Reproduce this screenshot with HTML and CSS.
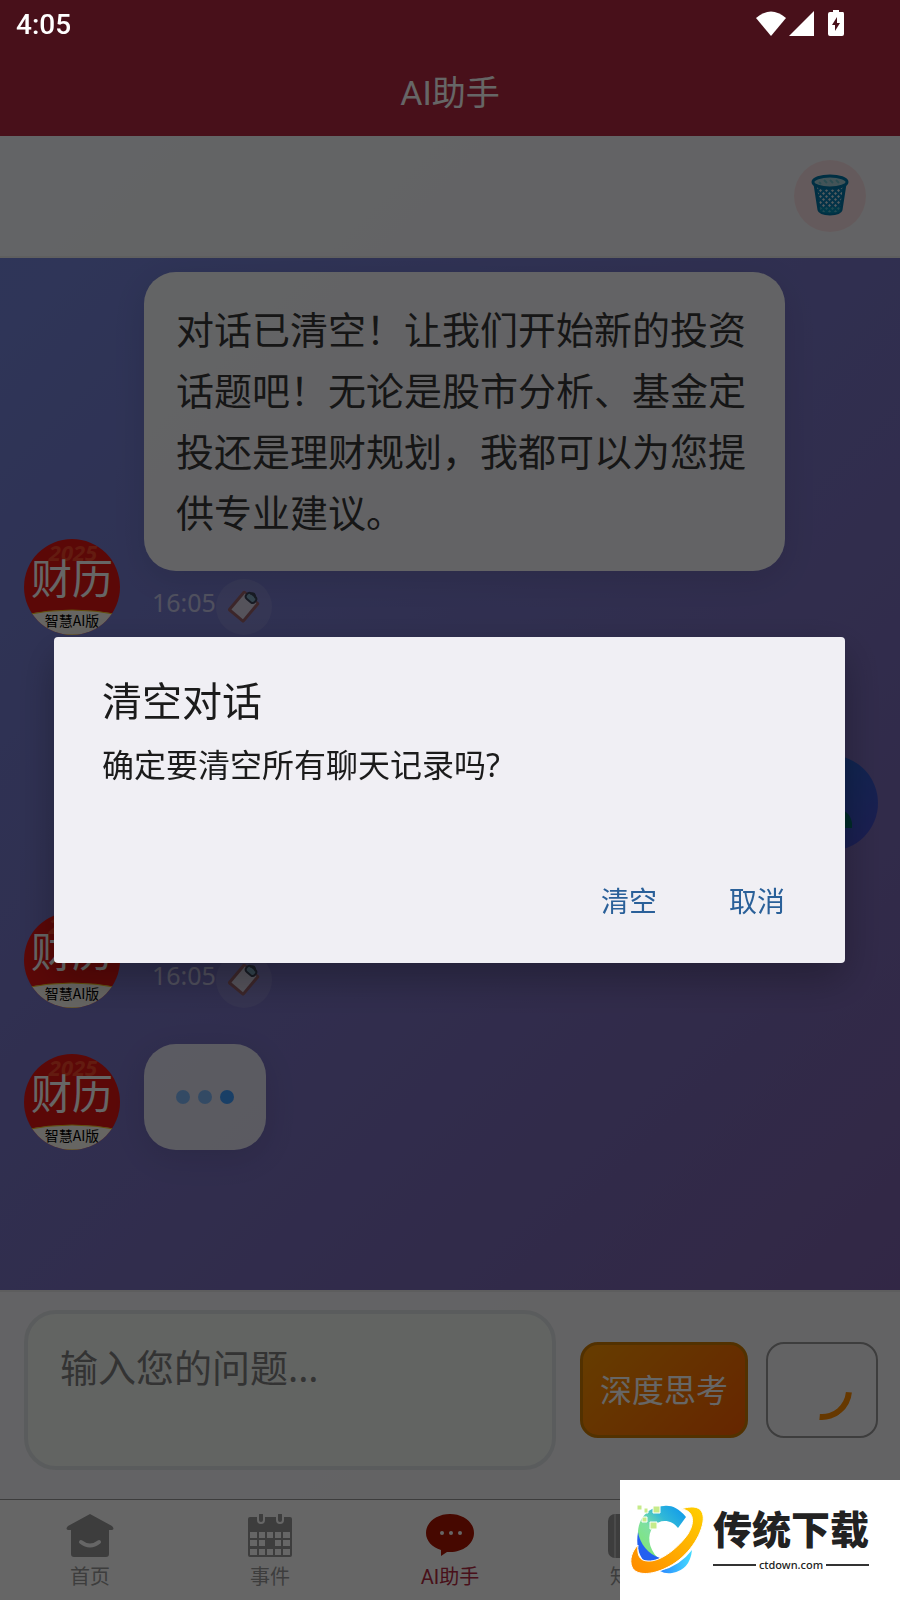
FILE: index.html
```html
<!doctype html>
<html lang="zh-CN">
	<head>
		<title>AI助手</title>
		<meta charset="utf-8" />
		<meta name="viewport" content="width=device-width, initial-scale=1.0" />
		<link rel="stylesheet" href="styles.css">
	</head>

	<body>

		<!-- shared drawings -->
		<svg class="defs" aria-hidden="true">
			<defs>
				<clipPath id="round"><circle cx="48" cy="48" r="48"/></clipPath>
				<symbol id="logo" viewBox="0 0 96 96">
					<g clip-path="url(#round)">
						<rect width="96" height="96" fill="#e31513"/>
						<text class="logo-year" x="49" y="22" text-anchor="middle">2025</text>
						<path d="M0 76 Q48 66 96 76 V96 H0Z" fill="#fffdf5" stroke="#f5c518" stroke-width="1"/>
						<text class="logo-name" x="48" y="55" text-anchor="middle">财历</text>
						<text class="logo-sub" x="48" y="87" text-anchor="middle">智慧AI版</text>
					</g>
				</symbol>
				<symbol id="clip" viewBox="0 0 36 36">
					<g transform="rotate(40 18 18)">
						<rect x="7" y="5" width="21" height="26" rx="2" fill="#96606a"/>
						<rect x="10" y="7" width="15" height="21" fill="#d4d0e4"/>
						<rect x="12" y="3" width="11" height="7" rx="3" fill="#7fa8c0" stroke="#3a4358" stroke-width="2"/>
						<path d="M14 4 Q17 -1 21 4" fill="none" stroke="#3a4358" stroke-width="2"/>
					</g>
				</symbol>
			</defs>
		</svg>

		<header class="header">
			<div class="status">
				<span class="clock">4:05</span>
				<svg class="status-icons" viewBox="0 0 90 28" width="90" height="28" aria-hidden="true">
					<path d="M0 7 Q15 -6 30 7 L15 25Z" fill="#fff"/>
					<path d="M33 25 L58 0 V25Z" fill="#fff"/>
					<path d="M77 -1 H83 V1 H87 Q88 1 88 3 V23 Q88 25 86 25 H74 Q72 25 72 23 V3 Q72 1 74 1 H77Z" fill="#fff"/>
					<path d="M81 6 L76 14 H79 V20 L84 12 H81Z" fill="#48101a"/>
				</svg>
			</div>
			<h1 class="title">AI助手</h1>
		</header>

		<main class="assistant">
			<div class="toolbar">
				<button class="trash" type="button" aria-label="清空对话">
					<svg viewBox="0 0 40 44" width="40" height="44" aria-hidden="true">
						<defs>
							<pattern id="mesh" width="6" height="6" patternUnits="userSpaceOnUse">
								<rect width="6" height="6" fill="#0a7fb5"/>
								<path d="M1.500 0 L3 1.500 L1.500 3 L0 1.500Z M4.500 3 L6 4.500 L4.500 6 L3 4.500Z" fill="#d5e6ec"/>
							</pattern>
						</defs>
						<path d="M5 10 L9 36 Q10 40 20 40 Q30 40 31 36 L35 10Z" fill="url(#mesh)" stroke="#0277a8" stroke-width="3"/>
						<path d="M9 33 H31 L30 38 Q20 41 10 38Z" fill="#0097b8" opacity=".6"/>
						<ellipse cx="20" cy="8" rx="17" ry="6" fill="#a8d2dc" stroke="#0277a8" stroke-width="3"/>
						<path d="M9 8 l2 2 m3 -4 l3 3 m3 -3 l3 3 m3 -3 l3 3" stroke="#6fc0ce" stroke-width="2"/>
					</svg>
				</button>
			</div>

			<section class="chat">
				<div class="row">
					<svg class="avatar" role="img" aria-label="财历"><use href="#logo"/></svg>
					<div class="content">
						<p class="bubble">对话已清空！让我们开始新的投资话题吧！无论是股市分析、基金定投还是理财规划，我都可以为您提供专业建议。</p>
						<div class="meta">
							<time>16:05</time>
							<button class="copy" type="button" aria-label="复制"><svg width="36" height="36"><use href="#clip"/></svg></button>
						</div>
					</div>
				</div>

				<div class="row mine">
					<svg class="avatar" viewBox="0 0 96 96" aria-hidden="true">
						<defs>
							<linearGradient id="blue" x1="0" y1="0" x2="1" y2="1">
								<stop offset="0" stop-color="#1668c8"/>
								<stop offset="1" stop-color="#4a48c8"/>
							</linearGradient>
						</defs>
						<circle cx="48" cy="48" r="48" fill="url(#blue)"/>
						<circle cx="48" cy="36" r="14" fill="#e8b48c"/>
						<path d="M26 73 V68 Q28 53 48 53 Q68 53 70 68 V73Z" fill="#006a68"/>
					</svg>
				</div>

				<div class="row">
					<svg class="avatar" role="img" aria-label="财历"><use href="#logo"/></svg>
					<div class="content">
						<p class="bubble short"></p>
						<div class="meta">
							<time>16:05</time>
							<button class="copy" type="button" aria-label="复制"><svg width="36" height="36"><use href="#clip"/></svg></button>
						</div>
					</div>
				</div>

				<div class="row">
					<svg class="avatar" role="img" aria-label="财历"><use href="#logo"/></svg>
					<div class="content">
						<div class="bubble typing"><i></i><i></i><i class="on"></i></div>
					</div>
				</div>
			</section>

			<form class="composer">
				<textarea class="question" aria-label="输入您的问题" placeholder="输入您的问题..."></textarea>
				<button class="think" type="button">深度思考</button>
				<button class="send" type="button" aria-label="发送"><span class="spinner"></span></button>
			</form>
		</main>

		<nav class="tabs">
			<a class="tab" href="#home">
				<svg viewBox="0 0 48 44" width="48" height="44" aria-hidden="true">
					<path d="M24 0 L46 12 Q49 15 46 16 H43 V40 Q43 43 40 43 H8 Q5 43 5 40 V16 H2 Q-1 15 2 12Z" fill="#999"/>
					<path d="M15 28 Q24 35 33 28" fill="none" stroke="#fff" stroke-width="4" stroke-linecap="round"/>
				</svg>
				首页
			</a>
			<a class="tab" href="#events">
				<svg viewBox="0 0 48 44" width="48" height="44" aria-hidden="true">
					<path d="M4 3 H44 Q46 3 46 5 V41 Q46 43 44 43 H4 Q2 43 2 41 V5 Q2 3 4 3Z" fill="#999"/>
					<path d="M11 0 h8 v6 q0 4 -4 4 t-4 -4z M30 0 h8 v6 q0 4 -4 4 t-4 -4z" fill="#fff"/>
					<path d="M15 1 V6 M34 1 V6" stroke="#999" stroke-width="4" stroke-linecap="round"/>
					<path d="M4 18h7v6h-7z M13 18h6v6h-6z M21 18h6v6h-6z M29 18h6v6h-6z M37 18h7v6h-7z M4 26h7v6h-7z M13 26h6v6h-6z M29 26h6v6h-6z M37 26h7v6h-7z M4 35h7v6h-7z M13 35h6v6h-6z M21 35h6v6h-6z M29 35h6v6h-6z M37 35h7v6h-7z" fill="#fff"/>
				</svg>
				事件
			</a>
			<a class="tab active" href="#assistant">
				<svg viewBox="0 0 48 44" width="48" height="44" aria-hidden="true">
					<path d="M24 0 C37 0 48 8 48 19 C48 30 37 38 24 38 L21 38 L15 42 V36 C6 33 0 27 0 19 C0 8 11 0 24 0Z" fill="#b01400"/>
					<circle cx="16" cy="19" r="2" fill="#fff"/>
					<circle cx="25" cy="19" r="2" fill="#fff"/>
					<circle cx="34" cy="19" r="2" fill="#fff"/>
				</svg>
				AI助手
			</a>
			<a class="tab" href="#learn">
				<svg viewBox="0 0 48 44" width="48" height="44" aria-hidden="true">
					<rect x="2" y="0" width="44" height="44" rx="7" fill="#999"/>
					<path d="M9 0 V44" stroke="#bbb" stroke-width="2"/>
				</svg>
				知识
			</a>
			<span class="tab"></span>
		</nav>

		<div class="mask">
			<div class="dialog" role="dialog" aria-labelledby="dialog-title">
				<h2 id="dialog-title">清空对话</h2>
				<p>确定要清空所有聊天记录吗?</p>
				<div class="actions">
					<button type="button">清空</button>
					<button type="button">取消</button>
				</div>
			</div>
		</div>

		<aside class="brand">
			<svg viewBox="0 0 76 72" width="76" height="72" aria-hidden="true">
				<defs>
					<linearGradient id="c1" x1="0" y1="1" x2="1" y2="0">
						<stop offset="0" stop-color="#7fe86a"/>
						<stop offset=".4" stop-color="#7fe0a0"/>
						<stop offset=".65" stop-color="#30b8d8"/>
						<stop offset="1" stop-color="#0a94f0"/>
					</linearGradient>
					<linearGradient id="c2" x1="0" y1="1" x2="1" y2="0">
						<stop offset="0" stop-color="#ff8a00"/>
						<stop offset="1" stop-color="#ffcf00"/>
					</linearGradient>
					<linearGradient id="c3" x1="0" y1="0" x2="1" y2="0">
						<stop offset="0" stop-color="#2a88ff"/>
						<stop offset="1" stop-color="#45dcff"/>
					</linearGradient>
				</defs>
				<!-- letter C -->
				<path d="M56 13 C48 3 40 1 34 2 C18 3 8 14 8 30 C11 42 16 50 28 54 C18 44 17 31 23 23 C30 14 42 16 48 24Z" fill="url(#c1)"/>
				<path d="M8 28 C10 40 18 50 30 54 Q22 60 14 57 C8 50 6 40 8 28Z" fill="#2360f0"/>
				<path d="M30 67 Q50 62 62 46 Q60 66 42 69 Q35 70 30 67Z" fill="url(#c3)"/>
				<!-- orbit -->
				<path d="M51 5 C66 0 75 4 73 18 C70 36 54 56 36 64 C22 71 6 72 2 63 C-1 56 2 47 8 41 C7 50 9 57 18 57 C31 58 49 43 58 30 C66 17 63 6 51 5Z" fill="url(#c2)" stroke="#fff" stroke-width="1"/>
				<path d="M23 2h7v7h-7z M12 13h5v5h-5z M20 18h7v7h-7z M14 4h4v5h-4z M7 1h5v5h-5z" fill="#c6eb8a" stroke="#fff" stroke-width="1"/>
			</svg>
			<div class="brand-text">
				<strong>传统下载</strong>
				<span class="site">ctdown.com</span>
			</div>
		</aside>

	</body>
</html>
```

FILE: styles.css
```css
* {
	box-sizing: border-box;
}

body {
	margin: 0;
	min-height: 100vh;
	display: flex;
	flex-direction: column;
	font-family: "Noto Sans", "Noto Sans CJK SC", sans-serif;
	background: #fff;
}

h1, h2, p {
	margin: 0;
	font-weight: normal;
}

button {
	font: inherit;
	padding: 0;
	border: 0;
	background: none;
}

.defs {
	position: absolute;
	width: 0;
	height: 0;
}

/* header */
.header {
	background: #b42841;
}

/* stays bright above the mask */
.status {
	position: relative;
	z-index: 3;
	height: 50px;
	display: flex;
	justify-content: space-between;
	align-items: center;
	padding: 0 54px 0 16px;
	color: #fff;
}

.status-icons {
	overflow: visible;
}

.clock {
	font: 500 28px/50px Roboto, sans-serif;
}

.title {
	text-align: center;
	color: #fff;
	font-family: Roboto, "Noto Sans CJK SC", sans-serif;
	font-size: 34px;
	line-height: 86px;
}

/* assistant page */
.assistant {
	flex: 1;
	display: flex;
	flex-direction: column;
	background: linear-gradient(135deg, #7488e0, #7f5fa8);
}

.toolbar {
	display: flex;
	justify-content: flex-end;
	padding: 24px 34px;
	background: rgba(255, 255, 255, 0.95);
	border-bottom: 2px solid #eee;
}

.trash {
	width: 72px;
	height: 72px;
	border-radius: 50%;
	background: #fbe2e6;
	display: flex;
	justify-content: center;
	align-items: center;
}

.chat {
	flex: 1;
	display: flex;
	flex-direction: column;
	gap: 36px;
	padding: 14px 22px 36px 24px;
}

.row {
	display: flex;
	align-items: flex-end;
	gap: 24px;
}

.mine {
	flex-direction: row-reverse;
	min-height: 180px;
}

.avatar {
	flex: none;
	width: 96px;
	height: 96px;
}

.logo-year {
	font: italic bold 22px "Open Sans", sans-serif;
	fill: #f8452a;
}

.logo-name {
	font: 41px "Noto Sans CJK SC", sans-serif;
	fill: #fff;
}

.logo-sub {
	font: 14px "Noto Sans CJK SC", sans-serif;
	fill: #000;
}

.content {
	max-width: 75%;
	display: flex;
	flex-direction: column;
	gap: 8px;
}

.bubble {
	padding: 27px 32px 28px;
	border-radius: 32px;
	background: rgba(255, 255, 255, 0.95);
	box-shadow: 0 8px 32px rgba(0, 0, 0, 0.1);
	color: #383838;
	font-size: 38px;
	line-height: 61px;
}

.short {
	min-height: 57px;
}

.typing {
	display: flex;
	gap: 8px;
	padding: 46px 32px;
	background: rgba(255, 255, 255, 0.8);
}

.typing i {
	width: 14px;
	height: 14px;
	border-radius: 50%;
	background: #409eff;
	opacity: 0.6;
}

.typing .on {
	opacity: 1;
}

.meta {
	display: flex;
	align-items: flex-start;
	padding-left: 8px;
	color: rgba(255, 255, 255, 0.6);
	font-size: 25px;
	line-height: 46px;
}

.copy {
	width: 56px;
	height: 56px;
	border-radius: 50%;
	background: rgba(255, 255, 255, 0.1);
	display: flex;
	justify-content: center;
	align-items: center;
}

/* question form */
.composer {
	display: flex;
	align-items: center;
	padding: 18px 22px 29px 24px;
	background: rgba(255, 255, 255, 0.95);
	border-top: 2px solid #e8e8ea;
}

.question {
	flex: 1;
	min-width: 0;
	height: 160px;
	margin-right: 24px;
	padding: 23px 32px;
	border: 4px solid #e2e6e8;
	border-radius: 32px;
	background: #f5faf6;
	font: inherit;
	font-size: 38px;
	line-height: 60px;
	resize: none;
}

.question::placeholder {
	color: #808080;
}

.think,
.send {
	height: 96px;
	border-radius: 18px;
}

.think {
	width: 168px;
	margin-right: 18px;
	border: 3px solid #cc7a00;
	background: linear-gradient(135deg, #ff9800, #ff5f00);
	color: #fff;
	font-size: 32px;
	line-height: 40px;
}

.send {
	width: 112px;
	border: 2px solid #999;
	display: flex;
	justify-content: center;
	align-items: center;
}

.spinner {
	width: 60px;
	height: 60px;
	border: 6px solid transparent;
	border-bottom-color: #ff8c00;
	border-radius: 50%;
	transform: rotate(-40deg);
}

/* bottom tabs */
.tabs {
	display: flex;
	border-top: 1px solid #999;
	background: #fff;
}

.tab {
	flex: 1;
	display: flex;
	flex-direction: column;
	align-items: center;
	gap: 4px;
	padding: 14px 0 8px;
	color: #999;
	font-family: Roboto, "Noto Sans CJK SC", sans-serif;
	font-size: 20px;
	line-height: 30px;
	text-decoration: none;
}

.active {
	color: #b42841;
}

/* confirm dialog */
.mask {
	position: fixed;
	inset: 0;
	z-index: 2;
	display: flex;
	align-items: center;
	padding: 0 55px 0 54px;
	background: rgba(0, 0, 0, 0.6);
}

.dialog {
	flex: 1;
	padding: 39px 48px 42px;
	border-radius: 4px;
	background: #f0eff4;
	box-shadow: 0 16px 40px rgba(0, 0, 0, 0.28);
	color: #1b1b1b;
}

.dialog h2 {
	font-size: 40px;
	line-height: 50px;
	margin-bottom: 17px;
}

.dialog p {
	font-size: 32px;
	line-height: 44px;
}

.actions {
	display: flex;
	justify-content: flex-end;
	gap: 72px;
	margin-top: 94px;
	padding-right: 12px;
}

.actions button {
	color: #2a6099;
	font-size: 28px;
	line-height: 40px;
}

/* site badge */
.brand {
	position: fixed;
	right: 0;
	bottom: 0;
	z-index: 4;
	width: 280px;
	height: 120px;
	display: flex;
	align-items: center;
	gap: 7px;
	padding-left: 10px;
	background: #fff;
	color: #222;
}

.brand-text {
	width: 156px;
}

.brand strong {
	display: block;
	font: 900 39px/50px "Noto Sans CJK SC", sans-serif;
}

.site {
	display: flex;
	align-items: center;
	gap: 3px;
	font-size: 11px;
	font-weight: 500;
	line-height: 26px;
}

.site::before,
.site::after {
	content: "";
	flex: 1;
	height: 2px;
	background: #333;
}
```
